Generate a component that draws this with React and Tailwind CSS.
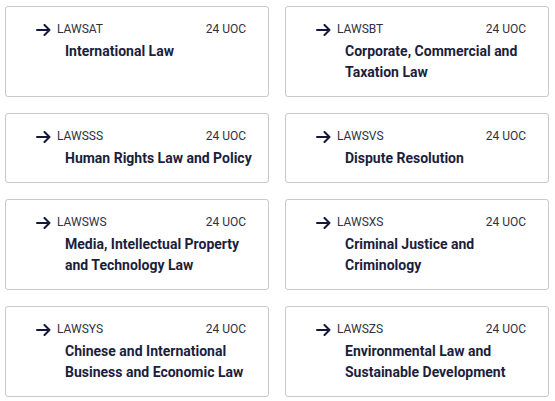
import React from "react";

const courses = [
  { code: "LAWSAT", uoc: 24, name: "International Law" },
  { code: "LAWSBT", uoc: 24, name: "Corporate, Commercial and Taxation Law" },
  { code: "LAWSSS", uoc: 24, name: "Human Rights Law and Policy" },
  { code: "LAWSVS", uoc: 24, name: "Dispute Resolution" },
  { code: "LAWSWS", uoc: 24, name: "Media, Intellectual Property and Technology Law" },
  { code: "LAWSXS", uoc: 24, name: "Criminal Justice and Criminology" },
  { code: "LAWSYS", uoc: 24, name: "Chinese and International Business and Economic Law" },
  { code: "LAWSZS", uoc: 24, name: "Environmental Law and Sustainable Development" },
];

const Arrow = () => (
  <svg width="15" height="12" viewBox="0 0 15 12" fill="none" className="shrink-0 mt-[1px]">
    <path d="M1 6h12.5M8.5 1l5 5-5 5" stroke="#14173a" strokeWidth="2" strokeLinecap="round" strokeLinejoin="round" />
  </svg>
);

const CourseCard = ({ course }) => (
  <div className="border border-[#c9c9c9] rounded-[3px] bg-white pt-[14px] pb-[13px] pl-[30px] pr-[8px]">
    <div className="flex items-center pr-[14px] text-[12px] leading-[16px] text-[#2f3142]">
      <Arrow />
      <span className="ml-[6px]">{course.code}</span>
      <span className="ml-auto">{course.uoc} UOC</span>
    </div>
    <div className="mt-[4px] pl-[29px] text-[14px] leading-[21px] font-bold text-[#1b1e3c]">
      {course.name}
    </div>
  </div>
);

export default function App() {
  return (
    <div className="bg-white min-h-screen pt-[6px] pl-[5px] pr-[6px]" style={{ fontFamily: "Roboto, 'Noto Sans', sans-serif" }}>
      <div className="grid grid-cols-2 gap-4">
        {courses.map((c) => (
          <CourseCard key={c.code} course={c} />
        ))}
      </div>
    </div>
  );
}
